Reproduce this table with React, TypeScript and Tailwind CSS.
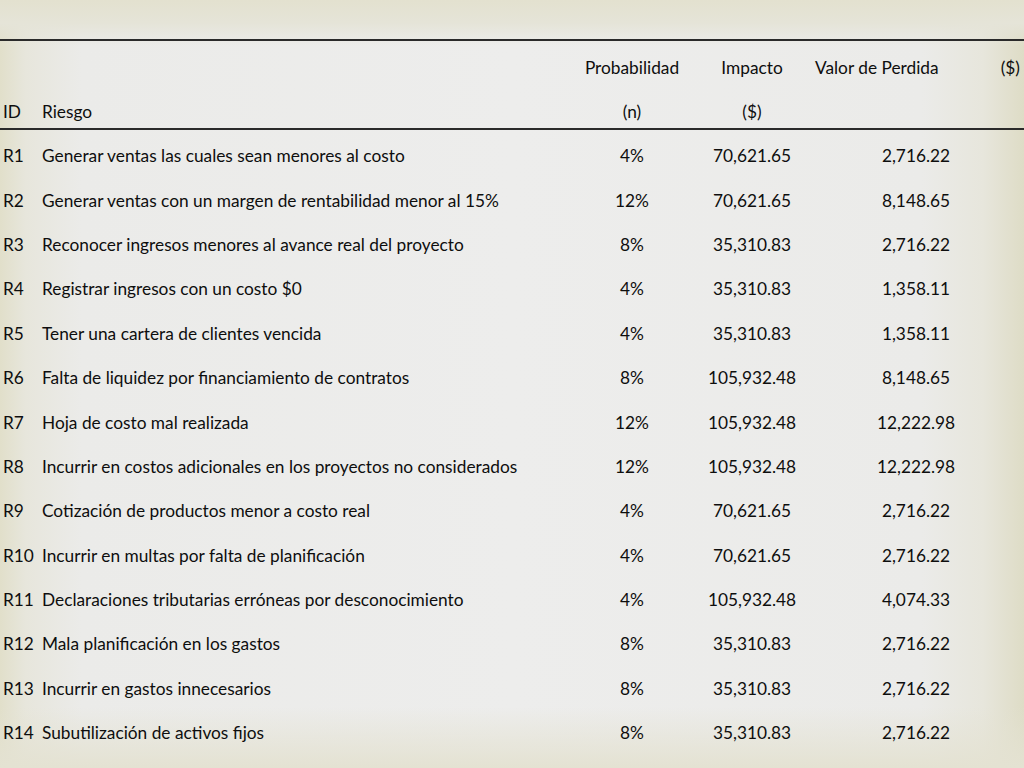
const rows: [string, string, string, string, string][] = [
  ["R1", "Generar ventas las cuales sean menores al costo", "4%", "70,621.65", "2,716.22"],
  ["R2", "Generar ventas con un margen de rentabilidad menor al 15%", "12%", "70,621.65", "8,148.65"],
  ["R3", "Reconocer ingresos menores al avance real del proyecto", "8%", "35,310.83", "2,716.22"],
  ["R4", "Registrar ingresos con un costo $0", "4%", "35,310.83", "1,358.11"],
  ["R5", "Tener una cartera de clientes vencida", "4%", "35,310.83", "1,358.11"],
  ["R6", "Falta de liquidez por financiamiento de contratos", "8%", "105,932.48", "8,148.65"],
  ["R7", "Hoja de costo mal realizada", "12%", "105,932.48", "12,222.98"],
  ["R8", "Incurrir en costos adicionales en los proyectos no considerados", "12%", "105,932.48", "12,222.98"],
  ["R9", "Cotización de productos menor a costo real", "4%", "70,621.65", "2,716.22"],
  ["R10", "Incurrir en multas por falta de planificación", "4%", "70,621.65", "2,716.22"],
  ["R11", "Declaraciones tributarias erróneas por desconocimiento", "4%", "105,932.48", "4,074.33"],
  ["R12", "Mala planificación en los gastos", "8%", "35,310.83", "2,716.22"],
  ["R13", "Incurrir en gastos innecesarios", "8%", "35,310.83", "2,716.22"],
  ["R14", "Subutilización de activos fijos", "8%", "35,310.83", "2,716.22"],
]

const cols = "grid grid-cols-[42px_530px_120px_120px_212px]"

export default function App() {
  return (
    <div
      className="h-[768px] w-[1024px] overflow-hidden text-[17.3px] leading-[20px] text-[#0e0e0e] bg-[linear-gradient(to_bottom,#e3e1cf_0%,#e5e4d8_3%,rgba(236,236,234,0)_6%,rgba(236,236,234,0)_92%,#e4e2d2_100%),linear-gradient(to_right,#e1dfca_0%,#e7e6dc_2.5%,#ebebe9_8%,#ededec_50%,#ebebe9_90%,#e7e6dc_96%,#dedcc6_100%)]"
      style={{ fontFamily: "Lato, 'Open Sans', sans-serif" }}
    >
      <div className="h-[39px]" />
      <div className="border-t-2 border-b-2 border-[#2a2a2a]">
        {/* header */}
        <div className={`${cols} h-[49px] pt-[5px] box-border items-center`}>
          <div />
          <div />
          <div className="text-center">Probabilidad</div>
          <div className="text-center">Impacto</div>
          <div className="flex justify-between pl-[3px] pr-[4px]">
            <span>Valor de Perdida</span>
            <span>($)</span>
          </div>
        </div>
        <div className={`${cols} h-[38px] pt-[6px] box-border items-center`}>
          <div className="pl-[3px]">ID</div>
          <div>Riesgo</div>
          <div className="text-center">(n)</div>
          <div className="text-center">($)</div>
          <div />
        </div>
      </div>
      <div className="pt-[4px]">
        {rows.map(([id, riesgo, prob, impacto, valor]) => (
          <div key={id} className={`${cols} h-[44.4px] items-center`}>
            <div className="pl-[3px]">{id}</div>
            <div className="whitespace-nowrap">{riesgo}</div>
            <div className="text-center">{prob}</div>
            <div className="text-center">{impacto}</div>
            <div className="text-center pr-[4px]">{valor}</div>
          </div>
        ))}
      </div>
    </div>
  )
}
